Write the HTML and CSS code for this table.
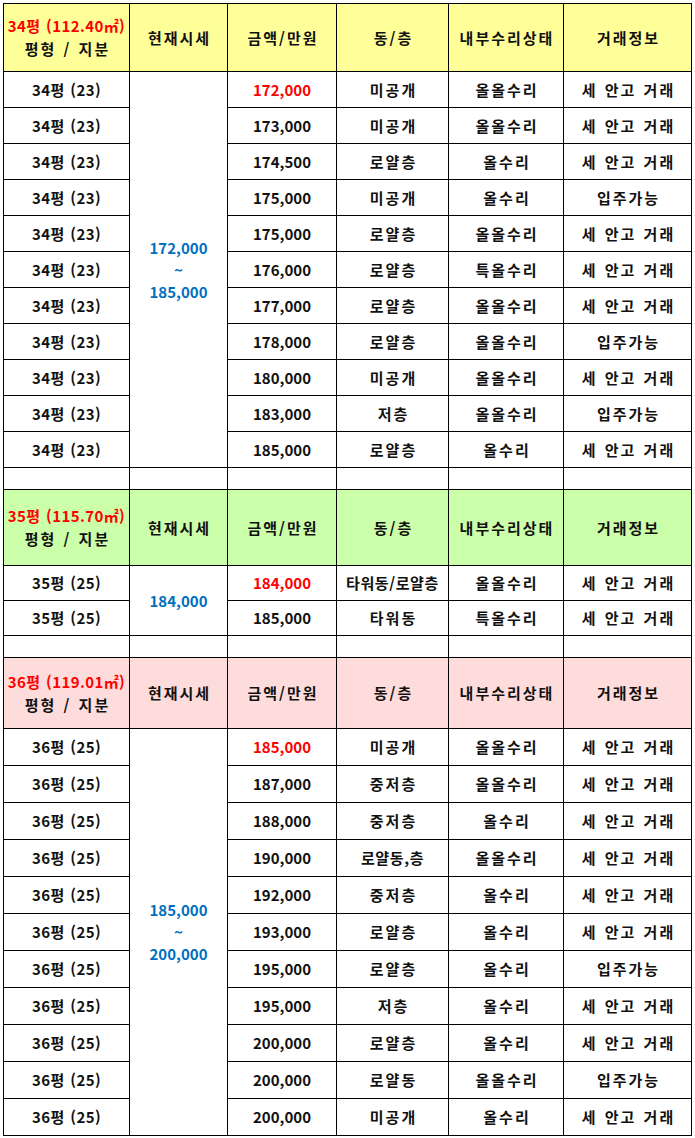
FILE: index.html
```html
<!DOCTYPE html>
<html lang="ko">
<head>
<meta charset="utf-8">
<link rel="stylesheet" href="styles.css">
</head>
<body>
<table class="grid">
  <colgroup>
    <col class="c1"><col class="c2"><col class="c3"><col class="c4"><col class="c5"><col class="c6">
  </colgroup>
  <tbody>
    <tr class="head h1 yellow">
      <td class="size"><div class="red area">34평 (112.40㎡)</div><div class="kind">평형 / 지분</div></td>
      <td>현재시세</td><td>금액/만원</td><td>동/층</td><td>내부수리상태</td><td>거래정보</td>
    </tr>
    <tr class="r36"><td class="p">34평 (23)</td><td rowspan="11" class="n blue">172,000<br>~<br>185,000</td><td class="n red">172,000</td><td>미공개</td><td>올올수리</td><td>세 안고 거래</td></tr>
    <tr class="r36"><td class="p">34평 (23)</td><td class="n">173,000</td><td>미공개</td><td>올올수리</td><td>세 안고 거래</td></tr>
    <tr class="r36"><td class="p">34평 (23)</td><td class="n">174,500</td><td>로얄층</td><td>올수리</td><td>세 안고 거래</td></tr>
    <tr class="r36"><td class="p">34평 (23)</td><td class="n">175,000</td><td>미공개</td><td>올수리</td><td>입주가능</td></tr>
    <tr class="r36"><td class="p">34평 (23)</td><td class="n">175,000</td><td>로얄층</td><td>올올수리</td><td>세 안고 거래</td></tr>
    <tr class="r36"><td class="p">34평 (23)</td><td class="n">176,000</td><td>로얄층</td><td>특올수리</td><td>세 안고 거래</td></tr>
    <tr class="r36"><td class="p">34평 (23)</td><td class="n">177,000</td><td>로얄층</td><td>올올수리</td><td>세 안고 거래</td></tr>
    <tr class="r36"><td class="p">34평 (23)</td><td class="n">178,000</td><td>로얄층</td><td>올올수리</td><td>입주가능</td></tr>
    <tr class="r36"><td class="p">34평 (23)</td><td class="n">180,000</td><td>미공개</td><td>올올수리</td><td>세 안고 거래</td></tr>
    <tr class="r36"><td class="p">34평 (23)</td><td class="n">183,000</td><td>저층</td><td>올올수리</td><td>입주가능</td></tr>
    <tr class="r36"><td class="p">34평 (23)</td><td class="n">185,000</td><td>로얄층</td><td>올수리</td><td>세 안고 거래</td></tr>
    <tr class="spacer"><td></td><td></td><td></td><td></td><td></td><td></td></tr>
    <tr class="head h2 green">
      <td class="size"><div class="red area">35평 (115.70㎡)</div><div class="kind">평형 / 지분</div></td>
      <td>현재시세</td><td>금액/만원</td><td>동/층</td><td>내부수리상태</td><td>거래정보</td>
    </tr>
    <tr class="r35"><td class="p">35평 (25)</td><td rowspan="2" class="n blue">184,000</td><td class="n red">184,000</td><td class="mixed">타워동/로얄층</td><td>올올수리</td><td>세 안고 거래</td></tr>
    <tr class="r35"><td class="p">35평 (25)</td><td class="n">185,000</td><td>타워동</td><td>특올수리</td><td>세 안고 거래</td></tr>
    <tr class="spacer"><td></td><td></td><td></td><td></td><td></td><td></td></tr>
    <tr class="head h3 pink">
      <td class="size"><div class="red area">36평 (119.01㎡)</div><div class="kind">평형 / 지분</div></td>
      <td>현재시세</td><td>금액/만원</td><td>동/층</td><td>내부수리상태</td><td>거래정보</td>
    </tr>
    <tr class="r37"><td class="p">36평 (25)</td><td rowspan="11" class="n blue">185,000<br>~<br>200,000</td><td class="n red">185,000</td><td>미공개</td><td>올올수리</td><td>세 안고 거래</td></tr>
    <tr class="r37"><td class="p">36평 (25)</td><td class="n">187,000</td><td>중저층</td><td>올올수리</td><td>세 안고 거래</td></tr>
    <tr class="r37"><td class="p">36평 (25)</td><td class="n">188,000</td><td>중저층</td><td>올수리</td><td>세 안고 거래</td></tr>
    <tr class="r37"><td class="p">36평 (25)</td><td class="n">190,000</td><td class="mixed">로얄동,층</td><td>올올수리</td><td>세 안고 거래</td></tr>
    <tr class="r37"><td class="p">36평 (25)</td><td class="n">192,000</td><td>중저층</td><td>올수리</td><td>세 안고 거래</td></tr>
    <tr class="r37"><td class="p">36평 (25)</td><td class="n">193,000</td><td>로얄층</td><td>올수리</td><td>세 안고 거래</td></tr>
    <tr class="r37"><td class="p">36평 (25)</td><td class="n">195,000</td><td>로얄층</td><td>올수리</td><td>입주가능</td></tr>
    <tr class="r37"><td class="p">36평 (25)</td><td class="n">195,000</td><td>저층</td><td>올수리</td><td>세 안고 거래</td></tr>
    <tr class="r37"><td class="p">36평 (25)</td><td class="n">200,000</td><td>로얄층</td><td>올수리</td><td>세 안고 거래</td></tr>
    <tr class="r37"><td class="p">36평 (25)</td><td class="n">200,000</td><td>로얄동</td><td>올올수리</td><td>입주가능</td></tr>
    <tr class="r37"><td class="p">36평 (25)</td><td class="n">200,000</td><td>미공개</td><td>올수리</td><td>세 안고 거래</td></tr>
  </tbody>
</table>
</body>
</html>
```

FILE: styles.css
```css
html, body {
  margin: 0;
  padding: 0;
  background: #ffffff;
}
body {
  padding: 3px 0 0 3px;
  font-family: "Noto Sans CJK KR", "Noto Sans", sans-serif;
  font-weight: bold;
  font-size: 15px;
  color: #111111;
}
.grid {
  border-collapse: collapse;
  table-layout: fixed;
  width: 688px;
}
.grid td {
  border: 1px solid #000000;
  padding: 0 0 0 2px;
  text-align: center;
  vertical-align: middle;
  white-space: nowrap;
  line-height: 22px;
  letter-spacing: 2px;
  word-spacing: 1px;
}
.grid td.n {
  letter-spacing: 0;
  word-spacing: 0;
  padding: 0;
}
.grid td.p {
  letter-spacing: 0.4px;
  word-spacing: 1px;
  padding: 0;
}
.grid td.mixed {
  letter-spacing: 0.6px;
  padding: 0;
}
.grid td.size {
  padding: 0;
}
.area {
  height: 22px;
  letter-spacing: 0.4px;
  overflow: hidden;
}
.kind {
  height: 22px;
  margin-top: 1px;
  padding-left: 2px;
}
.c1 { width: 126px; }
.c2 { width: 98px; }
.c3 { width: 109px; }
.c4 { width: 112px; }
.c5 { width: 115px; }
.c6 { width: 128px; }

.h1 td { height: 67px; }
.h2 td { height: 75px; }
.h3 td { height: 70px; }
.r36 td { height: 35px; }
.r35 td { height: 34px; }
.r37 td { height: 36px; }
.spacer td { height: 21px; }

.yellow td { background: #ffff99; }
.green td { background: #ccffaa; }
.pink td { background: #ffdcdc; }

.red { color: #ff0000; }
.blue { color: #0070c0; }
```
